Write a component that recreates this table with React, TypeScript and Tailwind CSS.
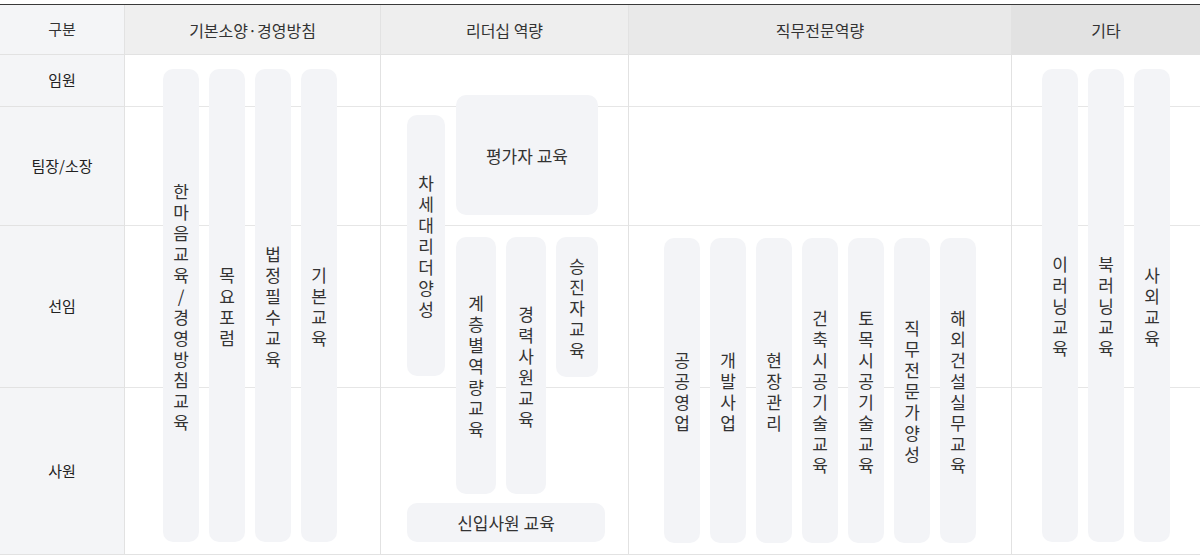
import React from "react";

const FONT = "font-['Noto_Sans_CJK_KR','Noto_Sans',sans-serif]";

function VPill({ text, className }: { text: string; className: string }) {
  return (
    <div
      className={`rounded-[10px] bg-[#f3f4f7] flex flex-col items-center justify-center text-[17px] leading-[21px] text-[#333] ${className}`}
    >
      {Array.from(text).map((c, i) => (
        <span key={i} className="block h-[21px]">
          {c}
        </span>
      ))}
    </div>
  );
}

function HPill({ text, className }: { text: string; className: string }) {
  return (
    <div
      className={`rounded-[10px] bg-[#f3f4f7] flex items-center justify-center text-[17px] leading-[21px] text-[#333] ${className}`}
    >
      {text}
    </div>
  );
}

function CatCol({
  children,
  last,
  layer,
}: {
  children: React.ReactNode;
  last?: boolean;
  layer: string;
}) {
  return (
    <div
      className={`grid grid-cols-1 grid-rows-[52px_119px_162px_167px] ${
        last ? "" : "border-r border-[#e2e2e2]"
      }`}
    >
      <div className="row-start-1 col-start-1 border-b border-[#e6e6e6]" />
      <div className="row-start-2 col-start-1 border-b border-[#e6e6e6]" />
      <div className="row-start-3 col-start-1 border-b border-[#e6e6e6]" />
      <div className="row-start-4 col-start-1 border-b border-[#e2e2e2]" />
      <div className={`row-start-1 row-span-4 col-start-1 relative z-10 flex ${layer}`}>
        {children}
      </div>
    </div>
  );
}

export default function App() {
  const labels = [
    { t: "임원", h: "h-[52px]" },
    { t: "팀장/소장", h: "h-[119px]" },
    { t: "선임", h: "h-[162px]" },
    { t: "사원", h: "h-[167px]" },
  ];
  return (
    <div className={`w-[1200px] h-[557px] bg-white pt-[4px] overflow-hidden ${FONT}`}>
      <div className="border-t border-[#3a3a3a]">
        {/* header */}
        <div className="grid grid-cols-[125px_256px_248px_383px_188px] h-[50px] text-[16px] text-[#333]">
          <div className="bg-[#f4f5f7] border-r border-b border-[#e2e2e2] flex items-center justify-center text-[15px]">
            구분
          </div>
          <div className="bg-[#efefef] border-r border-b border-[#e2e2e2] flex items-center justify-center">
            기본소양·경영방침
          </div>
          <div className="bg-[#eeeeee] border-r border-b border-[#e2e2e2] flex items-center justify-center">
            리더십 역량
          </div>
          <div className="bg-[#e9e9e9] border-r border-b border-[#e2e2e2] flex items-center justify-center">
            직무전문역량
          </div>
          <div className="bg-[#e2e2e2] border-b border-[#e2e2e2] flex items-center justify-center">
            기타
          </div>
        </div>

        {/* body */}
        <div className="grid grid-cols-[125px_256px_248px_383px_188px]">
          <div className="flex flex-col">
            {labels.map((l) => (
              <div
                key={l.t}
                className={`${l.h} bg-[#f4f5f7] border-r border-b border-[#e2e2e2] flex items-center justify-center text-[15px] text-[#222]`}
              >
                {l.t}
              </div>
            ))}
          </div>

          <CatCol layer="gap-[10px] pl-[38px] pt-[14px] pb-[13px]">
            <VPill text="한마음교육/경영방침교육" className="w-[36px]" />
            <VPill text="목요포럼" className="w-[36px]" />
            <VPill text="법정필수교육" className="w-[36px]" />
            <VPill text="기본교육" className="w-[36px]" />
          </CatCol>

          <CatCol layer="flex-col items-start pl-[26px] pt-[40px]">
            <div className="flex items-start gap-[11px]">
              <VPill text="차세대리더양성" className="w-[38px] h-[261px] mt-[20px]" />
              <div className="w-[142px] flex flex-col gap-[22px]">
                <HPill text="평가자 교육" className="h-[120px]" />
                <div className="flex items-start gap-[10px]">
                  <VPill text="계층별역량교육" className="w-[40px] h-[257px]" />
                  <VPill text="경력사원교육" className="w-[40px] h-[257px]" />
                  <VPill text="승진자교육" className="w-[42px] h-[140px]" />
                </div>
              </div>
            </div>
            <HPill text="신입사원 교육" className="mt-[9px] w-[198px] h-[39px]" />
          </CatCol>

          <CatCol layer="gap-[10px] pl-[35px] pt-[183px] pb-[12px]">
            <VPill text="공공영업" className="w-[36px]" />
            <VPill text="개발사업" className="w-[36px]" />
            <VPill text="현장관리" className="w-[36px]" />
            <VPill text="건축시공기술교육" className="w-[36px]" />
            <VPill text="토목시공기술교육" className="w-[36px]" />
            <VPill text="직무전문가양성" className="w-[36px]" />
            <VPill text="해외건설실무교육" className="w-[36px]" />
          </CatCol>

          <CatCol last layer="gap-[10px] pl-[30px] pt-[14px] pb-[13px]">
            <VPill text="이러닝교육" className="w-[36px]" />
            <VPill text="북러닝교육" className="w-[36px]" />
            <VPill text="사외교육" className="w-[36px]" />
          </CatCol>
        </div>
      </div>
    </div>
  );
}
